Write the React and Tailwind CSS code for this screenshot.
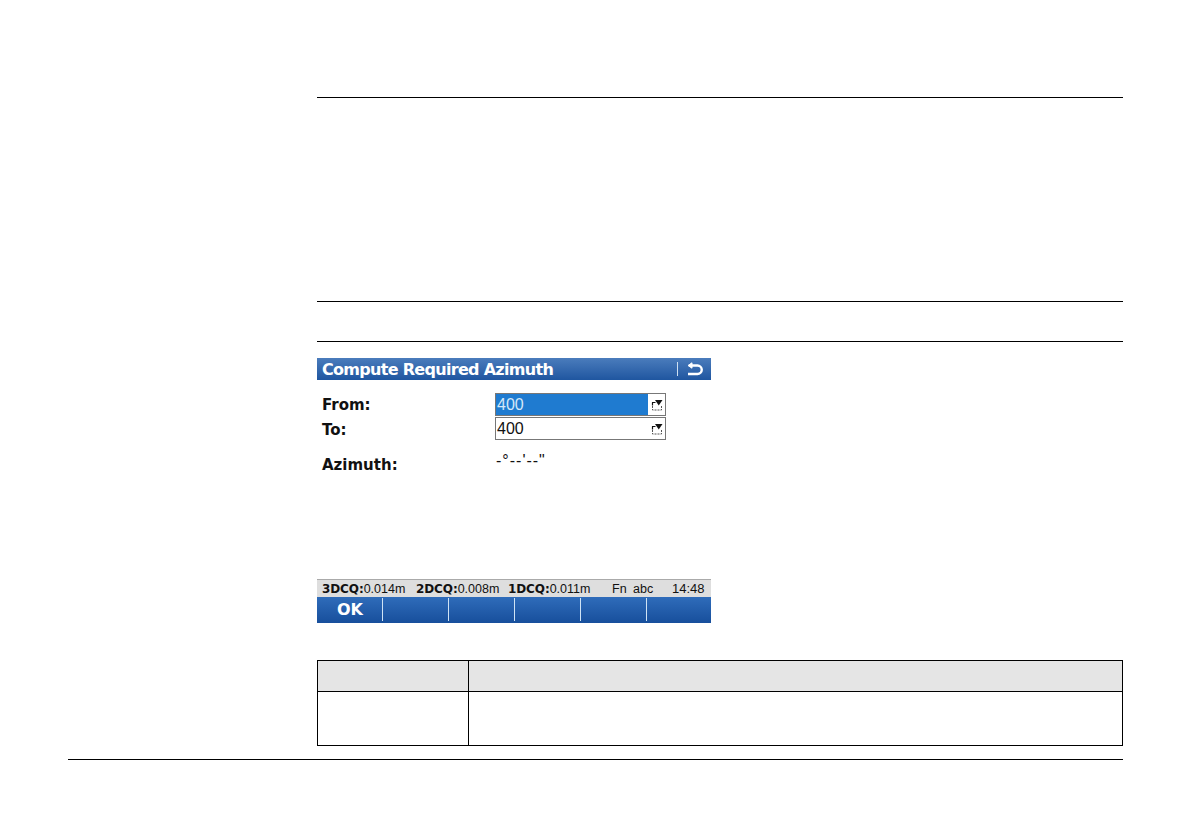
function Rule({ className = "" }) {
  return <div className={"h-px bg-black " + className} />;
}

function PickIcon() {
  return (
    <svg width="12" height="12" viewBox="0 0 12 12" className="shrink-0">
      <path d="M1.5 4v7h9V7" fill="none" stroke="#555" strokeWidth="1" strokeDasharray="2 1" />
      <path d="M1 3.5h3.5M1.5 3.5v3" stroke="#111" strokeWidth="1.2" fill="none" />
      <path d="M4 1h7.5L7.75 6.5z" fill="#111" />
    </svg>
  );
}

function Field({ value, active }) {
  return (
    <div className="w-[171px] h-[23px] border border-[#777] flex bg-white items-stretch">
      <div
        className={
          "w-[152px] pl-px font-['Liberation_Sans',sans-serif] text-[16px] leading-[21px] " +
          (active ? "bg-[#1f7bd0] text-[#d5e8f8]" : "text-[#111]")
        }
      >
        {value}
      </div>
      <div className="flex-1 flex items-center justify-center bg-white">
        <PickIcon />
      </div>
    </div>
  );
}

function Stat({ label, value, className = "" }) {
  return (
    <span className={className}>
      <b className="font-['DejaVu_Sans',sans-serif] font-bold text-[12px] tracking-[-0.1px]">{label}</b>
      {value}
    </span>
  );
}

export default function App() {
  return (
    <div className="w-[1190px] h-[840px] bg-white pl-[68px] pr-[67px] pt-[97px] font-['DejaVu_Sans',sans-serif] overflow-hidden">
      <div className="pl-[249px]">
        <Rule />
        <Rule className="mt-[203px]" />
        <Rule className="mt-[39px]" />

        <div className="w-[394px] mt-[16px]">
          <div className="h-[22px] bg-gradient-to-b from-[#4a7cbc] to-[#1f56a0] flex items-center text-white">
            <span className="pl-[5px] flex-1 font-bold text-[16px] leading-[23px] tracking-[-0.7px] whitespace-nowrap">
              Compute Required Azimuth
            </span>
            <div className="w-px h-[14px] bg-[#cfe0f2]" />
            <div className="w-[33px] flex justify-center">
              <svg width="17" height="15" viewBox="0 0 17 15" fill="none">
                <path d="M5 3.5h6.5a4 4 0 0 1 0 8.5H2" stroke="#fff" strokeWidth="2.4" />
                <path d="M6 0.8L2 3.5 6 6.2z" fill="#fff" stroke="#fff" strokeWidth="1" />
              </svg>
            </div>
          </div>

          <div className="h-[199px] pt-[13px] text-[15px] text-[#111]">
            <div className="flex h-[23px] items-start">
              <span className="w-[178px] pl-[5px] font-bold leading-[23px] pt-px">From:</span>
              <Field value="400" active />
            </div>
            <div className="flex h-[23px] mt-px items-start">
              <span className="w-[178px] pl-[5px] font-bold leading-[23px] pt-[2px]">To:</span>
              <Field value="400" />
            </div>
            <div className="flex h-[23px] mt-[10px] items-start">
              <span className="w-[178px] pl-[5px] font-bold leading-[22px] pt-[4px]">Azimuth:</span>
              <span className="font-['Liberation_Sans',sans-serif] text-[16px] leading-[22px] tracking-[1px] pl-px">-°--'--"</span>
            </div>
          </div>

          <div className="h-[18px] bg-[#dedede] border-t border-[#aaa] font-['Liberation_Sans',sans-serif] text-[12.5px] leading-[19px] text-[#111] whitespace-nowrap flex pl-[5px]">
            <Stat label="3DCQ:" value="0.014m" className="w-[94px]" />
            <Stat label="2DCQ:" value="0.008m" className="w-[92px]" />
            <Stat label="1DCQ:" value="0.011m" className="w-[104px]" />
            <span className="w-[21px]">Fn</span>
            <span className="w-[39px]">abc</span>
            <span className="text-[13px] leading-[17px]">14:48</span>
          </div>

          <div className="h-[26px] flex bg-gradient-to-b from-[#2f6cba] to-[#174f9c]">
            {["OK", "", "", "", "", ""].map((key, i) => (
              <div key={i} className={"flex items-center justify-center relative text-white font-bold text-[16px] " + (i < 5 ? "w-[66px]" : "flex-1")}>
                {key}
                {i < 5 && <div className="absolute right-0 top-[1px] h-[23px] w-px bg-[#cfe3f5]" />}
              </div>
            ))}
          </div>
        </div>

        <div className="mt-[37px] border border-black">
          <div className="flex h-[31px] bg-[#e5e5e5] border-b border-black">
            <div className="w-[151px] border-r border-black" />
          </div>
          <div className="flex h-[53px]">
            <div className="w-[151px] border-r border-black" />
          </div>
        </div>
      </div>
      <Rule className="mt-[13px]" />
    </div>
  );
}
